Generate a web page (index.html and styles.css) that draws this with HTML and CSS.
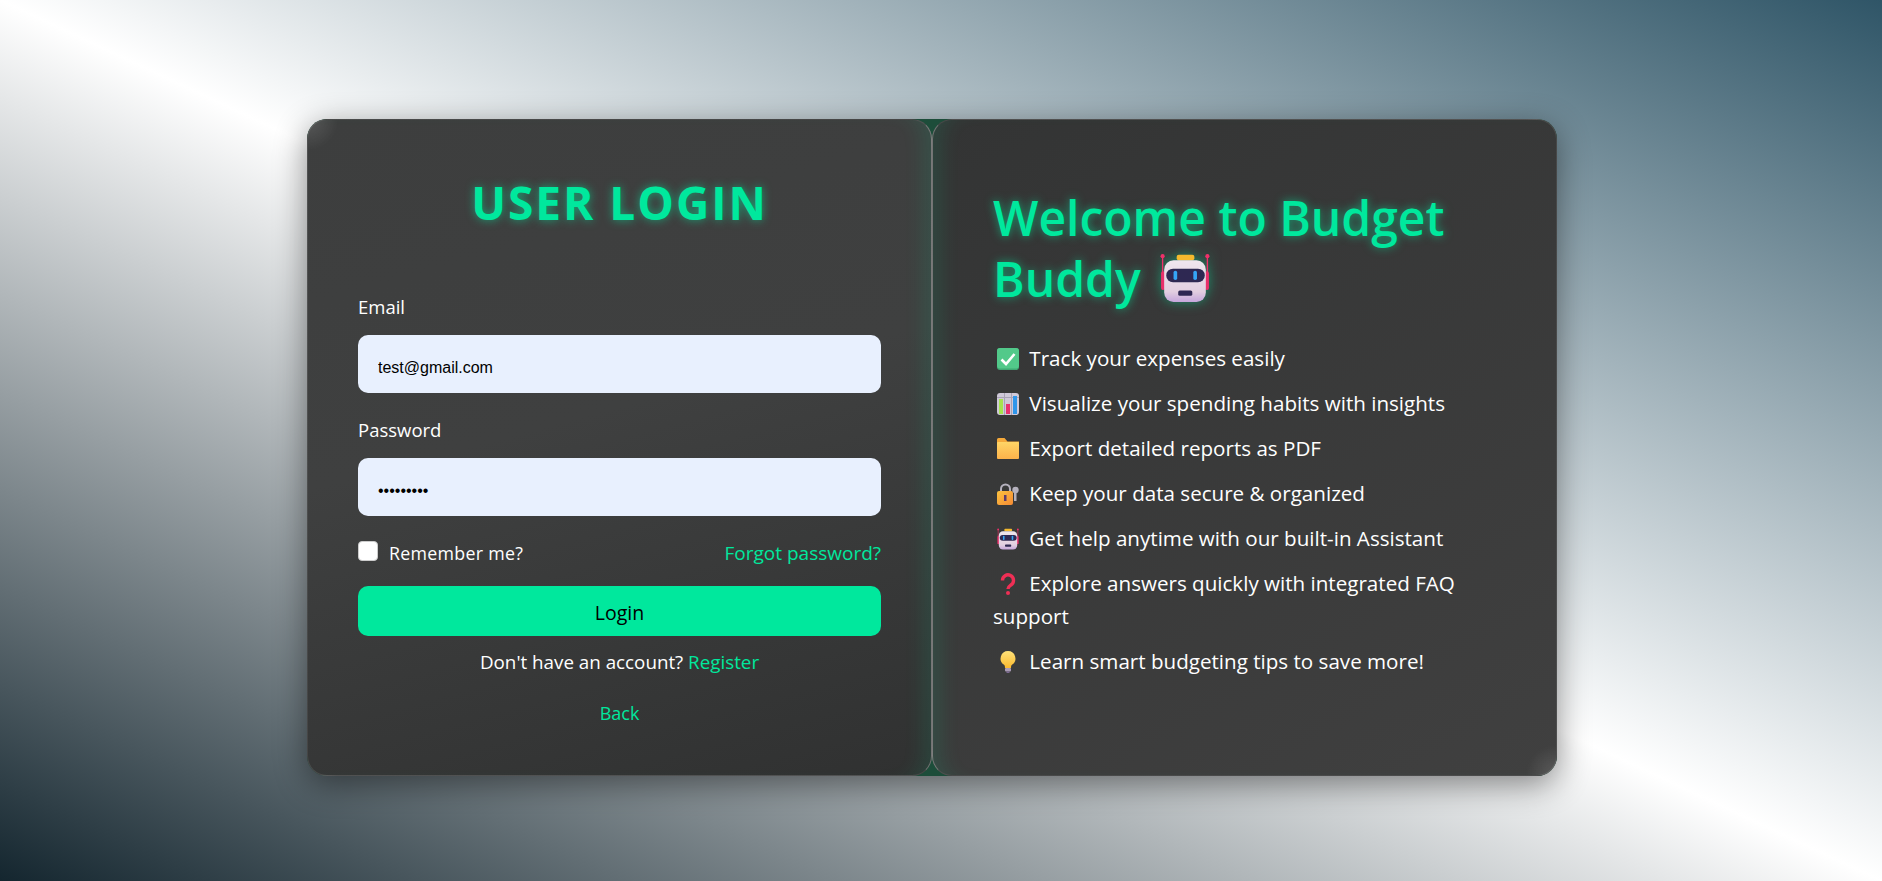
FILE: index.html
```html
<!DOCTYPE html>
<html lang="en">
<head>
  <meta charset="UTF-8" />
  <meta name="viewport" content="width=device-width, initial-scale=1.0" />
  <title>Budget Buddy - Login</title>
  <link rel="stylesheet" href="styles.css">
</head>
<body>

  <div class="wrapper">

    <section class="panel login">
      <h2 class="login-title">USER LOGIN</h2>

      <form class="login-form" onsubmit="event.preventDefault()">
        <label class="field-label" for="email">Email</label>
        <input class="field" id="email" type="email" value="test@gmail.com" />

        <label class="field-label" for="password">Password</label>
        <input class="field" id="password" type="password" value="123456789" />

        <div class="options">
          <label class="remember">
            <input class="check" type="checkbox" />
            <span>Remember me?</span>
          </label>
          <a class="link" href="#">Forgot password?</a>
        </div>

        <button class="btn-login" type="submit">Login</button>
      </form>

      <p class="register">Don't have an account? <a class="link" href="#">Register</a></p>
      <p class="back"><a class="link" href="#">Back</a></p>
    </section>

    <section class="panel welcome">
      <h1 class="welcome-title">Welcome to Budget Buddy
        <svg class="robot-big" viewBox="0 0 48 48"><use href="#robot" /></svg>
      </h1>

      <ul class="features">
        <li>
          <svg class="emoji" viewBox="0 0 22 22">
            <rect width="22" height="22" rx="3" fill="#3fa873" />
            <rect width="22" height="20.500" rx="3" fill="#52c98a" />
            <path d="M4.500 11.500l4.500 4.500 8.500-10" fill="none" stroke="#fff" stroke-width="2.600" />
          </svg>
          Track your expenses easily
        </li>
        <li>
          <svg class="emoji" viewBox="0 0 22 22">
            <rect width="22" height="22" rx="3" fill="#cfc9d8" />
            <path d="M0 4.500h22M7.500 0v22M14.500 0v22" stroke="#a9a3b5" stroke-width="1" />
            <rect x="2" y="6" width="4" height="15" fill="#a6e34f" />
            <rect x="9" y="11" width="4" height="10" fill="#e8326e" />
            <rect x="16" y="3" width="4" height="18" fill="#2f96ea" />
          </svg>
          Visualize your spending habits with insights
        </li>
        <li>
          <svg class="emoji" viewBox="0 0 22 22">
            <path d="M0 1.500a1.500 1.500 0 0 1 1.500-1.500h6l3 3.500H22v5H0z" fill="#f5a93a" />
            <rect y="4" width="22" height="17" rx="1" fill="url(#folderFill)" />
          </svg>
          Export detailed reports as PDF
        </li>
        <li>
          <svg class="emoji" viewBox="0 0 22 22">
            <path d="M4 10V6a4.500 4.500 0 0 1 9 0v4" fill="none" stroke="#b5b1bd" stroke-width="2" />
            <rect y="8" width="16" height="14" rx="2" fill="url(#lockFill)" />
            <rect x="7" y="12" width="2.500" height="6" fill="#5b3a6b" />
            <circle cx="18.500" cy="7" r="3.200" fill="#b5b1bd" />
            <rect x="17" y="8" width="2.500" height="10" fill="#b5b1bd" />
          </svg>
          Keep your data secure &amp; organized
        </li>
        <li>
          <svg class="emoji" viewBox="0 0 48 48"><use href="#robot" /></svg>
          Get help anytime with our built-in Assistant
        </li>
        <li>
          <svg class="emoji" viewBox="0 0 22 22">
            <path d="M5.500 7.500a5.500 5.500 0 1 1 8.500 4.500c-2 1.400-3 2-3 4" fill="none" stroke="#ef2f55" stroke-width="3.400" />
            <circle cx="11" cy="20" r="2" fill="#ef2f55" />
          </svg>
          Explore answers quickly with integrated FAQ support
        </li>
        <li>
          <svg class="emoji" viewBox="0 0 22 22">
            <path d="M11 0a7.500 7.500 0 0 0-4 13.800c.8.600 1 1.700 1 3.200h6c0-1.500.2-2.600 1-3.200A7.500 7.500 0 0 0 11 0z" fill="url(#bulbFill)" />
            <rect x="8" y="17" width="6" height="3.500" rx="1" fill="#a99bb5" />
            <rect x="9.500" y="20.500" width="3" height="1.500" fill="#7d6a92" />
          </svg>
          Learn smart budgeting tips to save more!
        </li>
      </ul>
    </section>

  </div>

  <!-- gradients and the robot, which is used twice -->
  <svg class="defs" width="0" height="0">
    <defs>
      <linearGradient id="robotFace" x1="0" y1="0" x2="0" y2="1">
        <stop offset="0" stop-color="#efe6ee" />
        <stop offset="0.75" stop-color="#e2cfe0" />
        <stop offset="1" stop-color="#c5a6dc" />
      </linearGradient>
      <linearGradient id="folderFill" x1="0" y1="0" x2="0" y2="1">
        <stop offset="0" stop-color="#ffd566" />
        <stop offset="1" stop-color="#fdb24a" />
      </linearGradient>
      <linearGradient id="lockFill" x1="0" y1="0" x2="1" y2="1">
        <stop offset="0" stop-color="#fbc23f" />
        <stop offset="1" stop-color="#f58a34" />
      </linearGradient>
      <linearGradient id="bulbFill" x1="0" y1="0" x2="0" y2="1">
        <stop offset="0" stop-color="#ffe27a" />
        <stop offset="1" stop-color="#f9b92e" />
      </linearGradient>
      <symbol id="robot" viewBox="0 0 48 48">
        <rect x="16" y="1.600" width="17" height="5.500" rx="2" fill="#f4b92e" />
        <path d="M2.500 3v32M45.500 3v32" stroke="#f0306a" stroke-width="1.300" />
        <circle cx="2.500" cy="3" r="2" fill="#f0306a" />
        <circle cx="45.500" cy="3" r="2" fill="#f0306a" />
        <rect x="1" y="17.500" width="4" height="18" rx="2" fill="#e8306b" />
        <rect x="43" y="17.500" width="4" height="18" rx="2" fill="#e8306b" />
        <rect x="4" y="7" width="40" height="40" rx="9" fill="url(#robotFace)" />
        <rect x="6" y="15" width="37" height="13" rx="6.500" fill="#2e2852" />
        <rect x="13" y="17" width="3.500" height="9" rx="1.700" fill="#35a5f5" />
        <rect x="32" y="17" width="3.500" height="9" rx="1.700" fill="#35a5f5" />
        <rect x="17.500" y="36" width="13.500" height="5" rx="1.500" fill="#2e2852" />
      </symbol>
    </defs>
  </svg>

</body>
</html>
```

FILE: styles.css
```css
* {
  box-sizing: border-box;
}

html, body {
  height: 100%;
}

body {
  margin: 0;
  font-family: "Open Sans", "Noto Sans", sans-serif;
  background: linear-gradient(to top right, #14262f, #ffffff, #2f5567);
  display: flex;
  align-items: center;
  justify-content: center;
  overflow: hidden;
}

.wrapper {
  display: flex;
  width: 1250px;
  height: 657px;
  margin-top: 14px;
  margin-right: 18px;
  background-color: #1d4d3a;
  border-radius: 20px;
  box-shadow: 0 8px 32px rgba(0, 0, 0, 0.45);
}

.panel {
  flex: 0 0 50%;
  border-radius: 20px;
  border: 1px solid rgba(255, 255, 255, 0.1);
  color: #fff;
}

/* left side */
.login {
  padding: 51px 50px 0;
  border-right-color: rgba(255, 255, 255, 0.3);
  background:
    radial-gradient(circle at 0 0, rgba(255, 255, 255, 0.14), transparent 30px),
    linear-gradient(165deg, #3d3e3e, #3f4040 45%, #303131);
  box-shadow: inset -20px 0 20px -12px rgba(0, 232, 157, 0.11);
}

.login-title {
  margin: 0 0 61px;
  font-size: 46px;
  line-height: 62px;
  font-weight: 700;
  letter-spacing: 2px;
  text-align: center;
  color: #00e89d;
  text-shadow: 0 0 10px rgba(0, 232, 157, 0.6);
}

.field-label {
  display: block;
  font-size: 18.5px;
  line-height: 25px;
  margin-bottom: 16px;
}

.field {
  display: block;
  width: 100%;
  height: 58px;
  padding: 8px 20px 0;
  margin-bottom: 24px;
  border: 0;
  border-radius: 10px;
  background-color: #e8f0fe;
  font-family: "Liberation Sans", sans-serif;
  font-size: 16px;
  color: #000;
  outline: none;
}

.options {
  display: flex;
  justify-content: space-between;
  align-items: center;
  margin-top: -2px;
  height: 30px;
}

.remember {
  display: flex;
  align-items: center;
  gap: 11px;
  font-size: 17.8px;
  letter-spacing: 0.3px;
}

.check {
  appearance: none;
  width: 20px;
  height: 20px;
  margin: -4px 0 0;
  background-color: #fff;
  border-radius: 4px;
  border: 1px solid #ccc;
}

.link {
  color: #00e89d;
  text-decoration: none;
}

.options .link {
  font-size: 19px;
}

.btn-login {
  display: block;
  width: 100%;
  height: 50px;
  margin-top: 18px;
  padding-top: 3px;
  border: 0;
  border-radius: 10px;
  background-color: #00e89d;
  color: #000;
  font-family: inherit;
  font-size: 19.5px;
  font-weight: 500;
}

.register,
.back {
  margin: 0;
  text-align: center;
  font-size: 18.8px;
  line-height: 26px;
}

.register {
  margin-top: 13px;
}

.back {
  margin-top: 25px;
  font-size: 18px;
}

/* right side */
.welcome {
  padding: 67px 60px 0;
  border-left-color: rgba(255, 255, 255, 0.3);
  background:
    radial-gradient(circle at 100% 100%, rgba(255, 255, 255, 0.14), transparent 30px),
    linear-gradient(150deg, #333434, #404040);
  box-shadow: inset 20px 0 20px -12px rgba(0, 232, 157, 0.11);
}

.welcome-title {
  margin: 0 0 33px;
  font-size: 48px;
  line-height: 61px;
  font-weight: 600;
  color: #00e89d;
  text-shadow: 0 0 10px rgba(0, 232, 157, 0.6);
}

.robot-big {
  width: 50px;
  height: 50px;
  margin-left: 7px;
  vertical-align: -6px;
  filter: drop-shadow(0 0 6px rgba(0, 232, 157, 0.5));
}

.features {
  list-style: none;
  margin: 0;
  padding: 0;
}

.features li {
  font-size: 20.6px;
  line-height: 33px;
  margin-bottom: 12px;
}

.emoji {
  width: 22px;
  height: 22px;
  margin: 0 5px 0 4px;
  vertical-align: -4px;
}

.defs {
  position: absolute;
}
```
